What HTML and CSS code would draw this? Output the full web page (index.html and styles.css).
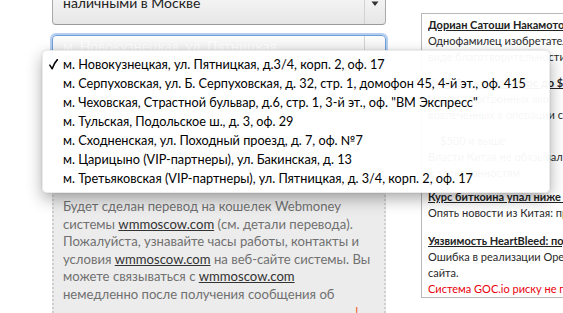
FILE: index.html
```html
<!DOCTYPE html>
<html lang="ru">
<head>
<meta charset="utf-8">
<title>Обмен</title>
<link rel="stylesheet" href="styles.css">
</head>
<body>
<div class="page">
  <div class="main">
    <div class="select select-top">
      <div class="select-text">Получить деньги<br>наличными в Москве</div>
      <div class="select-arrows">
        <svg width="8" height="12" viewBox="0 0 8 12"><path d="M4 0 L7.5 4.5 H0.5 Z M0.5 7.5 H7.5 L4 12 Z" fill="#333"/></svg>
      </div>
    </div>
    <div class="select select-focus">
      <div class="select-text">м. Новокузнецкая, ул. Пятницкая</div>
      <div class="select-arrows"></div>
    </div>
    <div class="panel">
      <p class="panel-text">Будет сделан перевод на кошелек Webmoney<br>системы <a href="#">wmmoscow.com</a> (см. детали перевода).<br>Пожалуйста, узнавайте часы работы, контакты и<br>условия <a href="#">wmmoscow.com</a> на веб-сайте системы. Вы<br>можете связываться с <a href="#">wmmoscow.com</a><br>немедленно после получения сообщения об<br><span class="warn warn-tail">!</span></p>
    </div>
  </div>
  <aside class="news">
    <div class="news-item">
      <a class="news-title" href="#">Дориан Сатоши Накамото не является создателем</a>
      <div class="news-line">Однофамилец изобретателя биткоина получил</div>
      <div class="news-line">виде благотворительности</div>
    </div>
    <div class="news-item">
      <a class="news-title" href="#">Курс биткоина вырос до $500</a>
      <div class="news-line">Число электронных яко</div>
      <div class="news-line">вовлеченных в операции с</div>
    </div>
    <div class="news-item news-item-tight">
      <div class="news-line news-sub">$500 и выше</div>
      <div class="news-line">Власти Китая не обязывали</div>
      <div class="news-line">к электронностям</div>
    </div>
    <div class="news-item news-item-wide">
      <a class="news-title" href="#">Курс биткоина упал ниже $500</a>
      <div class="news-line">Опять новости из Китая: пр</div>
    </div>
    <div class="news-item news-item-last">
      <a class="news-title" href="#">Уязвимость HeartBleed: подробности</a>
      <div class="news-line">Ошибка в реализации OpenSSL затронула</div>
      <div class="news-line">сайта.</div>
      <div class="news-line news-alert">Система GOC.io риску не подвержена</div>
    </div>
  </aside>
</div>

<div class="menu">
  <div class="menu-row"><svg class="check" width="9" height="11" viewBox="0 0 9 11"><path d="M0.8 6.2 L3.2 9.8 C4.5 6 6 3 8.4 0.6" fill="none" stroke="#000" stroke-width="1.5" stroke-linecap="round" stroke-linejoin="round"/></svg>м. Новокузнецкая, ул. Пятницкая, д.3/4, корп. 2, оф. 17</div>
  <div class="menu-row">м. Серпуховская, ул. Б. Серпуховская, д. 32, стр. 1, домофон 45, 4-й эт., оф. 415</div>
  <div class="menu-row">м. Чеховская, Страстной бульвар, д.6, стр. 1, 3-й эт., оф. "ВМ Экспресс"</div>
  <div class="menu-row">м. Тульская, Подольское ш., д. 3, оф. 29</div>
  <div class="menu-row">м. Сходненская, ул. Походный проезд, д. 7, оф. №7</div>
  <div class="menu-row">м. Царицыно (VIP-партнеры), ул. Бакинская, д. 13</div>
  <div class="menu-row">м. Третьяковская (VIP-партнеры), ул. Пятницкая, д. 3/4, корп. 2, оф. 17</div>
</div>
</body>
</html>
```
FILE: styles.css
```css
html, body {
  margin: 0;
  padding: 0;
  background: #fff;
}
body {
  width: 563px;
  height: 313px;
  overflow: hidden;
  position: relative;
  font-family: Lato, "Open Sans", sans-serif;
  color: #333;
}
.page {
  display: flex;
  align-items: flex-start;
}
.main {
  width: 334px;
  margin-left: 52px;
  flex: none;
}
.select {
  display: flex;
  box-sizing: border-box;
  border: 1px solid #a9a9a9;
  border-radius: 4px;
  background: linear-gradient(#fdfdfd, #f1f1f1 60%, #e6e6e6);
  font-size: 14px;
  line-height: 18px;
  color: #222;
}
.select-top {
  margin-top: -26px;
  height: 51px;
  border-bottom-color: #999;
}
.select-text {
  flex: 1;
  padding: 1px 10px 0;
  white-space: nowrap;
  overflow: hidden;
}
.select-arrows {
  width: 20px;
  border-left: 1px solid #d2d2d2;
  display: flex;
  align-items: center;
  justify-content: center;
}
.select-focus {
  margin-top: 10px;
  height: 28px;
  border-color: #6d9fd9;
  box-shadow: 0 0 0 2px rgba(120, 165, 225, 0.55);
  color: #fff;
}
.panel {
  margin-top: 127px;
  background: #ececec;
  border-left: 2px dotted #d0d0d0;
  border-right: 2px dotted #d0d0d0;
  padding: 8px 8px 20px 9px;
  overflow: hidden;
}
.panel-text {
  margin: 0;
  font-size: 13.1px;
  line-height: 17.6px;
  color: #707070;
  white-space: nowrap;
}
.panel-text a {
  color: #333;
  text-decoration: underline;
}
.warn {
  color: #f0602a;
}
.warn-tail {
  margin-left: 292px;
}
.news {
  flex: none;
  width: 220px;
  margin-left: 35px;
  margin-top: 13px;
  border: 1px solid #b8b8b8;
  padding: 3px 0 0 6px;
  font-size: 11px;
  line-height: 16px;
  color: #2a2a2a;
}
.news-item {
  margin-bottom: 10px;
  white-space: nowrap;
  overflow: hidden;
}
.news-item-tight {
  margin-bottom: 8px;
}
.news-item-wide {
  margin-bottom: 12px;
}
.news-item-last {
  margin-bottom: 0;
}
.news-title {
  display: block;
  font-weight: bold;
  color: #222;
  text-decoration: underline;
}
.news-sub {
  padding-left: 12px;
}
.news-alert {
  color: #e8000b;
}
.menu {
  position: absolute;
  left: 42px;
  top: 50px;
  width: 508px;
  box-sizing: border-box;
  padding: 4px 0;
  background: rgba(255, 255, 255, 0.955);
  border: 1px solid rgba(0, 0, 0, 0.08);
  border-radius: 5px;
  box-shadow: 0 6px 16px rgba(0, 0, 0, 0.32), 0 0 2px rgba(0, 0, 0, 0.15);
}
.menu-row {
  position: relative;
  height: 19px;
  line-height: 19px;
  padding-left: 20px;
  font-size: 12.7px;
  color: #000;
  white-space: nowrap;
}
.check {
  position: absolute;
  left: 6px;
  top: 4px;
}
```
